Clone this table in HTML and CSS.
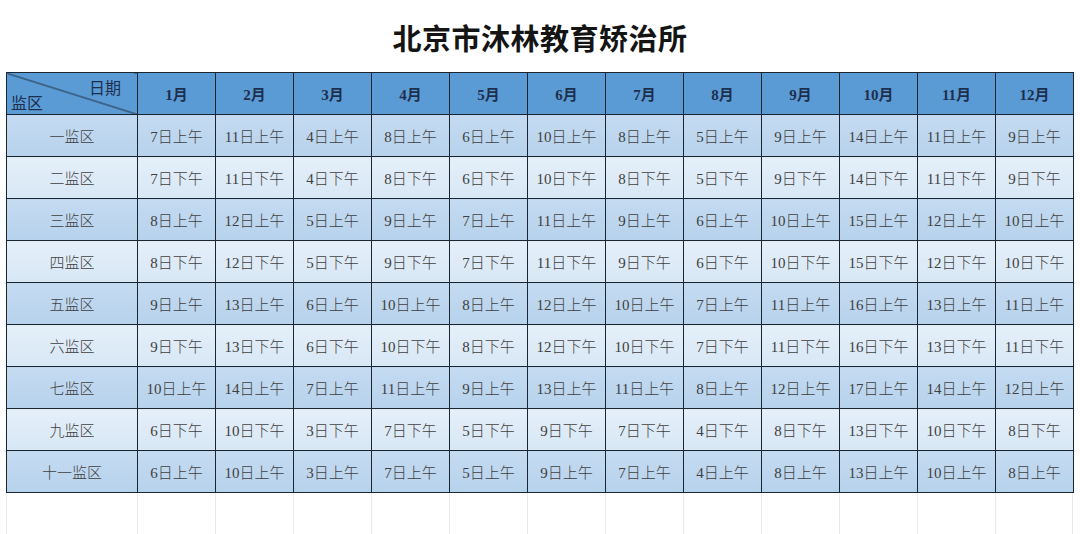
FILE: index.html
```html
<!DOCTYPE html>
<html lang="zh">
<head>
<meta charset="utf-8">
<title>北京市沐林教育矫治所</title>
<link rel="stylesheet" href="styles.css">
</head>
<body>
<div class="page">
  <h1 class="title">北京市沐林教育矫治所</h1>
  <table class="sched">
    <colgroup>
      <col class="c-first">
      <col class="c-m"><col class="c-m"><col class="c-m"><col class="c-m"><col class="c-m"><col class="c-m">
      <col class="c-m"><col class="c-m"><col class="c-m"><col class="c-m"><col class="c-m"><col class="c-m">
    </colgroup>
    <thead>
      <tr class="head">
        <th class="corner"><span class="c-top">日期</span><span class="c-bot">监区</span></th>
        <th>1月</th><th>2月</th><th>3月</th><th>4月</th><th>5月</th><th>6月</th>
        <th>7月</th><th>8月</th><th>9月</th><th>10月</th><th>11月</th><th>12月</th>
      </tr>
    </thead>
    <tbody>
      <tr class="odd"><td>一监区</td><td>7日上午</td><td>11日上午</td><td>4日上午</td><td>8日上午</td><td>6日上午</td><td>10日上午</td><td>8日上午</td><td>5日上午</td><td>9日上午</td><td>14日上午</td><td>11日上午</td><td>9日上午</td></tr>
      <tr class="even"><td>二监区</td><td>7日下午</td><td>11日下午</td><td>4日下午</td><td>8日下午</td><td>6日下午</td><td>10日下午</td><td>8日下午</td><td>5日下午</td><td>9日下午</td><td>14日下午</td><td>11日下午</td><td>9日下午</td></tr>
      <tr class="odd"><td>三监区</td><td>8日上午</td><td>12日上午</td><td>5日上午</td><td>9日上午</td><td>7日上午</td><td>11日上午</td><td>9日上午</td><td>6日上午</td><td>10日上午</td><td>15日上午</td><td>12日上午</td><td>10日上午</td></tr>
      <tr class="even"><td>四监区</td><td>8日下午</td><td>12日下午</td><td>5日下午</td><td>9日下午</td><td>7日下午</td><td>11日下午</td><td>9日下午</td><td>6日下午</td><td>10日下午</td><td>15日下午</td><td>12日下午</td><td>10日下午</td></tr>
      <tr class="odd"><td>五监区</td><td>9日上午</td><td>13日上午</td><td>6日上午</td><td>10日上午</td><td>8日上午</td><td>12日上午</td><td>10日上午</td><td>7日上午</td><td>11日上午</td><td>16日上午</td><td>13日上午</td><td>11日上午</td></tr>
      <tr class="even"><td>六监区</td><td>9日下午</td><td>13日下午</td><td>6日下午</td><td>10日下午</td><td>8日下午</td><td>12日下午</td><td>10日下午</td><td>7日下午</td><td>11日下午</td><td>16日下午</td><td>13日下午</td><td>11日下午</td></tr>
      <tr class="odd"><td>七监区</td><td>10日上午</td><td>14日上午</td><td>7日上午</td><td>11日上午</td><td>9日上午</td><td>13日上午</td><td>11日上午</td><td>8日上午</td><td>12日上午</td><td>17日上午</td><td>14日上午</td><td>12日上午</td></tr>
      <tr class="even"><td>九监区</td><td>6日下午</td><td>10日下午</td><td>3日下午</td><td>7日下午</td><td>5日下午</td><td>9日下午</td><td>7日下午</td><td>4日下午</td><td>8日下午</td><td>13日下午</td><td>10日下午</td><td>8日下午</td></tr>
      <tr class="odd"><td>十一监区</td><td>6日上午</td><td>10日上午</td><td>3日上午</td><td>7日上午</td><td>5日上午</td><td>9日上午</td><td>7日上午</td><td>4日上午</td><td>8日上午</td><td>13日上午</td><td>10日上午</td><td>8日上午</td></tr>
    </tbody>
  </table>
  <div class="gridfill">
    <span></span><span></span><span></span><span></span><span></span><span></span><span></span>
    <span></span><span></span><span></span><span></span><span></span><span></span>
  </div>
</div>
</body>
</html>
```
FILE: styles.css
```css
html, body {
  margin: 0;
  padding: 0;
  background: #ffffff;
}
body {
  font-family: "Liberation Serif", "Noto Sans CJK SC", serif;
  color: #404040;
}
.page {
  width: 1080px;
  height: 534px;
  overflow: hidden;
}
.title {
  margin: 0;
  height: 72px;
  box-sizing: border-box;
  padding-top: 19px;
  text-align: center;
  font-family: "Noto Sans CJK SC", sans-serif;
  font-weight: 700;
  font-size: 29px;
  line-height: 36px;
  color: #141414;
  letter-spacing: 0.5px;
}
.sched {
  margin-left: 6px;
  border-collapse: collapse;
  table-layout: fixed;
  width: 1067px;
}
.c-first { width: 131px; }
.c-m { width: 78px; }
.sched th, .sched td {
  border: 1px solid #1b2633;
  padding: 0;
  text-align: center;
  vertical-align: middle;
  font-size: 15px;
  white-space: nowrap;
}
.sched td {
  font-weight: 300;
}
.sched tr { height: 42px; }
.head th {
  background: #5b9bd5;
  color: #1d2f4d;
  font-weight: 700;
}
.corner {
  position: relative;
  background: linear-gradient(to top right, #5b9bd5 calc(50% - 0.9px), #1b2633 50%, #5b9bd5 calc(50% + 0.9px)) !important;
}
.corner .c-top {
  position: absolute;
  right: 16px;
  top: 2px;
  font-weight: 400;
  font-size: 16px;
  color: #1d2f4d;
}
.corner .c-bot {
  position: absolute;
  left: 4px;
  bottom: 0;
  font-weight: 400;
  font-size: 16px;
  color: #1d2f4d;
}
.odd td {
  background: linear-gradient(#c4dbf1, #b7d2ec);
}
.even td {
  background: linear-gradient(#e4eff9, #d8e7f5);
}
.gridfill {
  margin-left: 6px;
  display: grid;
  grid-template-columns: 131px repeat(12, 78px);
  height: 42px;
}
.gridfill span {
  border-left: 1px solid #e8eaec;
}
.gridfill span:last-child {
  border-right: 1px solid #e8eaec;
}
```
